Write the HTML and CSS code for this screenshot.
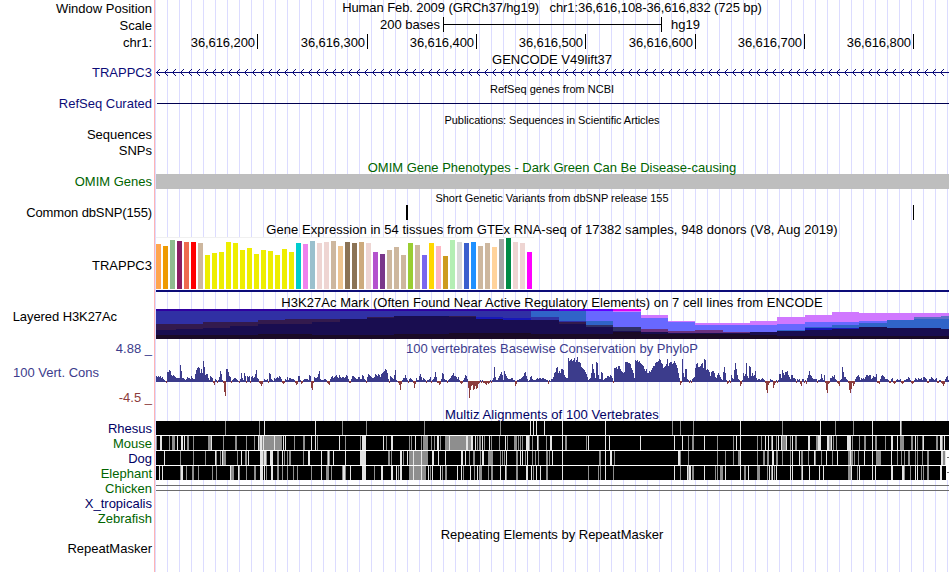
FILE: index.html
```
<!DOCTYPE html>
<html lang="en">
<head>
<meta charset="utf-8">
<title>Genome Browser chr1:36,616,108-36,616,832</title>
<link rel="stylesheet" href="styles.css">
</head>
<body>
<main class="browser">
  <div class="labels">
    <div class="label">Window Position</div>
    <div class="label gap-2">Scale</div>
    <div class="label gap-2">chr1:</div>
    <div class="label gap-15 navy">TRAPPC3</div>
    <div class="label gap-16 navy">RefSeq Curated</div>
    <div class="label gap-16">Sequences</div>
    <div class="label gap-1">SNPs</div>
    <div class="label gap-16 green">OMIM Genes</div>
    <div class="label gap-16 tight">Common dbSNP(155)</div>
    <div class="label gap-38">TRAPPC3</div>
    <div class="label gap-36 inset-h3k">Layered H3K27Ac</div>
    <div class="label gap-17 slate">4.88 _</div>
    <div class="label gap-9 slate inset-cons">100 Vert. Cons</div>
    <div class="label gap-10 rust">-4.5 _</div>
    <div class="label gap-16 deep">Rhesus</div>
    <div class="label green">Mouse</div>
    <div class="label deep">Dog</div>
    <div class="label green">Elephant</div>
    <div class="label green">Chicken</div>
    <div class="label deep">X_tropicalis</div>
    <div class="label green">Zebrafish</div>
    <div class="label gap-15">RepeatMasker</div>
  </div>
  <div class="lanes">
    <div class="title t-head">Human Feb. 2009 (GRCh37/hg19) &nbsp; chr1:36,616,108-36,616,832 (725 bp)</div>
    <div class="scale"><span class="scale-size">200 bases</span><span class="scale-bar"></span><span>hg19</span></div>
    <div class="ruler"><span class="first">36,616,200</span><span class="wide">36,616,300</span><span>36,616,400</span><span>36,616,500</span><span class="wide">36,616,600</span><span>36,616,700</span><span>36,616,800</span></div>
    <div class="title t-gencode">GENCODE V49lift37</div>
    <svg class="gene" id="gene" width="794" height="9"></svg>
    <div class="title small t-refseq">RefSeq genes from NCBI</div>
    <div class="refseq-line"></div>
    <div class="title small t-pubs">Publications: Sequences in Scientific Articles</div>
    <div class="title green t-omim">OMIM Gene Phenotypes - Dark Green Can Be Disease-causing</div>
    <div class="omim-bar"></div>
    <div class="title small t-snp">Short Genetic Variants from dbSNP release 155</div>
    <svg class="snps" width="794" height="15"><rect x="251" width="2" height="15"/><rect x="758" width="1" height="15"/></svg>
    <div class="title t-gtex">Gene Expression in 54 tissues from GTEx RNA-seq of 17382 samples, 948 donors (V8, Aug 2019)</div>
    <div class="gtex"><svg id="gtex" width="378" height="52"></svg></div>
    <div class="title t-h3k">H3K27Ac Mark (Often Found Near Active Regulatory Elements) on 7 cell lines from ENCODE</div>
    <svg id="h3k" width="794" height="30"></svg>
    <div class="title slate t-cons">100 vertebrates Basewise Conservation by PhyloP</div>
    <svg class="cons" id="cons" width="794" height="44"></svg>
    <div class="title deep t-multiz">Multiz Alignments of 100 Vertebrates</div>
    <svg id="multiz" width="794" height="59"></svg>
    <div class="chicken"></div>
    <div class="title t-repeat">Repeating Elements by RepeatMasker</div>
  </div>
</main>
<script src="tracks.js"></script>
</body>
</html>
```
FILE: styles.css
```
body {
  margin: 0;
  background: #fff;
  color: #000;
  font: 13px/15px "Liberation Sans", Arial, sans-serif;
}
.browser {
  display: flex;
  width: 950px;
  height: 572px;
  overflow: hidden;
}
.labels {
  width: 154px;
  box-sizing: border-box;
  padding: 1px 2px 0 0;
  text-align: right;
  white-space: nowrap;
}
.label { height: 15px; }
.gap-1 { margin-top: 1px; }
.gap-2 { margin-top: 2px; }
.gap-9 { margin-top: 9px; }
.gap-10 { margin-top: 10px; }
.gap-15 { margin-top: 15px; }
.gap-16 { margin-top: 16px; }
.gap-17 { margin-top: 17px; }
.gap-36 { margin-top: 36px; }
.gap-38 { margin-top: 38px; }
.tight { letter-spacing: -0.12px; }
.inset-h3k { padding-right: 35px; letter-spacing: -0.08px; }
.inset-cons { padding-right: 53px; }
.navy { color: #0c0c78; }
.deep { color: #000064; }
.green { color: #006400; }
.slate { color: #3c3c8c; }
.rust { color: #8c3c3c; }

.lanes {
  width: 794px;
  border-left: 1px solid #ffb4b4;
  background: repeating-linear-gradient(to right, #dcdcff 0 1px, #fff 1px 12px);
}
.lanes > svg { display: block; }
svg { shape-rendering: crispEdges; }
.title {
  height: 15px;
  line-height: 17px;
  text-align: center;
  white-space: nowrap;
}
.small { font-size: 11px; }
.t-head { line-height: 15px; letter-spacing: -0.09px; }

.scale {
  display: flex;
  height: 15px;
  margin-top: 2px;
}
.scale-size { width: 285px; margin-right: 3px; text-align: right; }
.scale-bar {
  width: 217px;
  margin-right: 9px;
  border: solid #000;
  border-width: 0 1px;
  background: linear-gradient(#000, #000) 0 7px / 100% 1px no-repeat;
}
.ruler {
  display: flex;
  height: 15px;
  margin-top: 2px;
  line-height: 17px;
  text-align: right;
  letter-spacing: -0.08px;
}
.ruler span {
  box-sizing: border-box;
  width: 109px;
  padding-right: 2px;
  border-right: 1px solid #000;
}
.ruler .first { width: 103px; }
.ruler .wide { width: 110px; }
.t-gencode { margin-top: 2px; }
.gene { margin-top: 2px; }
.t-refseq { margin-top: 5px; line-height: 15px; }
.refseq-line {
  height: 1px;
  margin: 6px 0 0 2px;
  background: #000050;
}
.t-pubs { margin-top: 8px; letter-spacing: -0.06px; }
.t-omim { margin-top: 32px; }
.omim-bar { height: 15px; margin-left: 1px; background: #bebebe; }
.t-snp { margin-top: 1px; }
.t-gtex { margin-top: 1px; letter-spacing: 0.045px; }
.gtex {
  height: 53px;
  margin: 1px 0 0 1px;
  border-bottom: 2px solid #0c0c78;
}
.gtex svg { display: block; background: #fff; border-top: 1px solid #f0f0f0; box-sizing: border-box; height: 53px; }
.t-h3k { margin-top: 2px; letter-spacing: 0.045px; }
.t-cons { margin-top: 1px; }
.cons { margin-top: 1px; }
.t-multiz { margin-top: 6px; letter-spacing: 0.08px; }
.chicken {
  height: 4px;
  margin: 5px 0 0 1px;
  border: solid #6c6c6c;
  border-width: 1px 0;
}
.t-repeat { margin-top: 35px; }
```
FILE: tracks.js
```
const NS = 'http://www.w3.org/2000/svg';
const ORIGIN = 155;
function rect(svg, x, y, w, h, fill) {
  const r = document.createElementNS(NS, 'rect');
  for (const [k, v] of Object.entries({ x, y, width: w, height: h, fill })) r.setAttribute(k, v);
  svg.appendChild(r);
}
const byId = id => document.getElementById(id);

// Transcript: a line with strand arrows
const gene = byId('gene');
rect(gene, 1, 4, 793, 1, '#0c0c78');
for (let x = 1; x < 794; x += 8) {
  for (let i = 1; i < 4; i++) {
    rect(gene, x + i, 4 - i, 1, 1, '#0c0c78');
    rect(gene, x + i, 4 + i, 1, 1, '#0c0c78');
  }
}

// Expression per tissue: [height, colour]
const T = '#cdb79e', Y = '#eeee00', P = '#eed5d2';
const tissues = [[45,'#ffa54f'],[43,'#ee9a00'],[49,'#8fbc8f'],[48,'#8b1c62'],[47,'#ee6a50'],[47,'#ff0000'],[46,T],
 [34,Y],[36,Y],[37,Y],[47,Y],[46,Y],[39,Y],[41,Y],[35,Y],[39,Y],[38,Y],[34,Y],[40,Y],[37,Y],
 [46,'#00cdcd'],[45,'#ee82ee'],[48,'#9ac0cd'],[46,P],[47,P],[48,T],[43,'#eec591'],[47,'#8b7355'],[46,'#8b7355'],[47,'#cdaa7d'],[46,P],
 [37,'#b452cd'],[35,'#7a378b'],[39,T],[42,T],[34,T],[46,'#9acd32'],[44,T],[34,'#7a67ee'],[46,'#ffd700'],[43,'#ffb6c1'],[33,'#cd9b1d'],
 [49,'#b4eeb4'],[47,'#d9d9d9'],[46,'#3a5fcd'],[47,'#1e90ff'],[43,T],[46,T],[42,'#ffd39b'],[50,'#a6a6a6'],[52,'#008b45'],[47,P],[46,P],[37,'#ff00ff']];
tissues.forEach(([h, c], i) => rect(byId('gtex'), i * 7, 51 - h, 5, h, c));

// Histone mark: column edges, then [top, colour] bands in thirds of a pixel from the track top
const edges = [156,176,203,230,258,285,312,340,367,394,421,449,476,503,531,559,586,613,641,668,695,723,750,777,805,832,859,887,914,941,949];
const A = '#3000a0', B = '#3030a4', M = '#331a4d', N = '#190d50', D = '#1a0a26', V = '#6000ff', L = '#6868ff', K = '#d078ff', S = '#3064c8', U = '#1818b8', G = '#6070c8', R = '#6a3080', Q = '#303068';
const bands = [
 [0,A,6,B,46,M,63,N,78,D],[0,A,6,B,46,M,59,N,78,D],[0,A,6,B,40,M,57,N,77,D],[0,A,6,B,40,M,51,N,77,D],[0,A,6,B,33,M,45,N,76,D],
 [0,A,6,B,30,M,45,N,76,D],[0,A,6,B,30,M,39,N,77,D],[0,A,6,B,30,N,77,D],[0,A,6,B,24,M,27,N,77,D],[0,A,6,B,21,N,76,D],
 [0,A,6,B,21,N,75,D],[0,A,6,B,21,M,24,N,72,D],[0,A,6,B,24,U,30,N,73,D],[0,A,6,B,27,U,33,N,73,D],[0,A,6,S,24,B,33,N,74,D],
 [0,'#5800e0',6,S,36,B,39,M,45,N,75,D],[0,V,6,L,36,S,48,Q,54,N,75,D],[0,'#e000f0',6,K,9,L,54,Q,66,N,69,D],[18,K,27,L,60,R,69,N,75,D],[36,K,39,L,66,R,72,N,75,D],
 [42,K,48,L,63,R,72,N,75,D],[42,K,48,L,69,R,72,N,75,D],[36,K,48,L,69,N,78,D],[24,K,45,L,63,S,66,N,80,D],[18,K,39,L,54,S,57,U,63,N,82,D],
 [9,K,39,L,48,S,56,U,59,N,81,D],[12,K,36,L,42,S,55,N,80,D],[12,K,33,S,58,N,82,D],[12,K,24,G,30,S,58,N,82,D],[12,K,21,G,30,S,59,N,81,D]];
bands.forEach((b, i) => {
  for (let j = 0; j < b.length; j += 2) {
    const y = Math.round(b[j] / 3);
    rect(byId('h3k'), edges[i] - ORIGIN, y, edges[i + 1] - edges[i], 30 - y, b[j + 1]);
  }
});

// Conservation, one character per pixel: 0-9a-z above the axis, A-Z below
const cons = '5454534210A' + [
 '99ba65654333','3ga332124332','53227bded8c8','ke67731543AC','21A14a71AJNc','c954A1233210','A283185A545A','45347b32ABDB','02112A872103',
 '2343542ABA21','41332221ACB5','51BA12222165','FHA43347a211','1221ABC24534','564364344346','52AA25543224','4226521A4765','433476576478',
 '9acb82A54326','b10ACHB13363','1A2321AFB311','5741321A1124','A12494AACB28','7211A1235685','54241ABA1365','2FPHDCHGDGFB','A1A1AABCABA1',
 'A13e41135796','1a7532223311','DB1122345895','201452111232','332332211B10','22489de8a8cc','b6433nklmkln','jlojjiedcb97','41238hc83ji6',
 '229812335546','53Addecffca9','89jjjiihdb83','lkljkihgfcac','88a9bdffijjk','mlihdefhmfij','jhikigd83CAm','84cc21A1A234','dhieefhidmlb',
 'cb959aa84368','64219e81BA1A','632bic621DB1','857i53fe5856','a312212321AH','KCA211FCA1A1','773b8699a642','66332A212BD2','2A1B36a65322',
 '22A1127316AH','KBA3354621AB','D12e94421AHK','GADB24564132','324665662354','47AAB2565422','21AA23ABA121','12ABA1122431','ABA132132231',
 '4432AA224321','23AA11ABDB24','51'].join('');
const AXIS = 25;
[...cons].forEach((ch, i) => {
  if (/[A-Z]/.test(ch)) rect(byId('cons'), i + 1, AXIS, 1, ch.charCodeAt(0) - 63, '#8c3c3c');
  else rect(byId('cons'), i + 1, AXIS - parseInt(ch, 36), 1, parseInt(ch, 36) + 1, '#3c3c8c');
});

// Alignments: mismatch stripes as position, tone (w light, g grey), width
const species = [
 '225g 259g 264w 315w 342g 366g 424g 500g 530w 533w 536w 544w 562w 605w 672g 680g 693g 740w 782g 820w 835g 853g 872w 900w 901g',
 '156g 160w2 169g 172g3 177w 181w2 184w 187g2 193g 208g3 211w 223g 235g2 246g 254g 258w 259g 260w2 262g 263w 264g18 274w 283w 285w 294g 303g2 311w 315w 317g 339w 345g 360g 362w4 383w 386g 391w2 409g 411g 415w 421g 423g5 431g 434g 437w2 440g 445g4 449w 450g16 466w2 468g3 471w2 475w 477g 479g2 482w 484g 489w 491g 499g 505w 507g 514g3 518g 520g 522g 526w3 529g 532g 537w 538g 546g 550w2 562w 565g2 586g 588w 605w 609w 640w 674w 682w 688g 692g2 704w 717g 733g 736w 740w 757g 761g 765w 768w 771g 772w 776g 778w 781w 782g4 786w 790g 792w 795g2 808w2 816g2 818w3 827w2 829g2 831w 833g 836g 847w4 852g 859g 864g2 872w 875g 876g 885g 891w2 897w 900g4 911g2 915w 917g 922g 923w 936g2 940w2 942g 944w',
 '164w 180g 193g 205g 215w 216g 220g 222w 223g3 237g 241w 245g2 248w 260w3 263g 264w2 266g 270w3 277g2 282w 284g 287g 289g2 303g 308w2 321w 327g 328w 329g 333w 345w 360w6 388g2 391g 400w2 403g 407w 409g19 413w 421w 432w2 438w 445w 461w2 465w 469g 473g2 480g 482w2 488g5 500g 502g 504g 506w 516g2 520w 522w 525g 527w 532g 535g 538g 546g2 549g 552w 562w 599g2 605w 610w2 614g 678w2 680g 688g 717g 725g 733g 738g2 740w 757g 763g2 767g 768g 772w2 776g2 782g 790g 792w 799w 801g2 808g 814w 815g 821g 826w 832g 837w 848g2 850w 851g2 854g 858g 864w 872w 876g5 891w 897g 901g 904g 908g2 915g 917g 922g 927g2 941w2 943g2 945w',
 '159w 162w 180g 181w2 186g 192g2 198g 212g 216g 230w 231g3 238w 239g 246g 254g2 260w3 264w 266g 271w2 277g2 282g 287g 293g 297g 311g 321w 326g3 331g 342g 343w2 345g 350w 362w4 374g 381w2 391w2 396w 398g 400w2 409g17 413w 421w 428w 430g 432w 440w 442g 445g2 457w 461w 463g 470w 474g 477w 479g3 488g 491g2 500w 505w 506g 516g2 526w2 531w 533g 536w 540w 546g2 562w 588g 598g 600g 605w 613g 674w 680g 687w 688g 689w2 692g2 704w 715g 717g 720g 721g2 725w 740w 744g2 748w 757g3 767g 769w 771g 772w 774g 776w 790w 792w 801g 802w 809w 819w 823w 848g3 851w 857g 859w 872w 875w 891w2 902w2 904g 910g 915w 917w 921g 923g 927g2 940w2'];
rect(byId('multiz'), 1, 0, 793, 59, '#fff');
species.forEach((row, i) => {
  const y = i * 15;
  rect(byId('multiz'), 1, y, i < 2 ? 793 : 790, 14, '#000');
  if (i > 1) rect(byId('multiz'), 792, y + 6, 2, 1, '#6c6c6c');
  for (const [, x, tone, w] of row.matchAll(/(\d+)([wg])(\d*)/g))
    rect(byId('multiz'), x - ORIGIN, y, w || 1, 14, tone === 'w' ? '#e4e4e4' : '#8e8e8e');
});
```
